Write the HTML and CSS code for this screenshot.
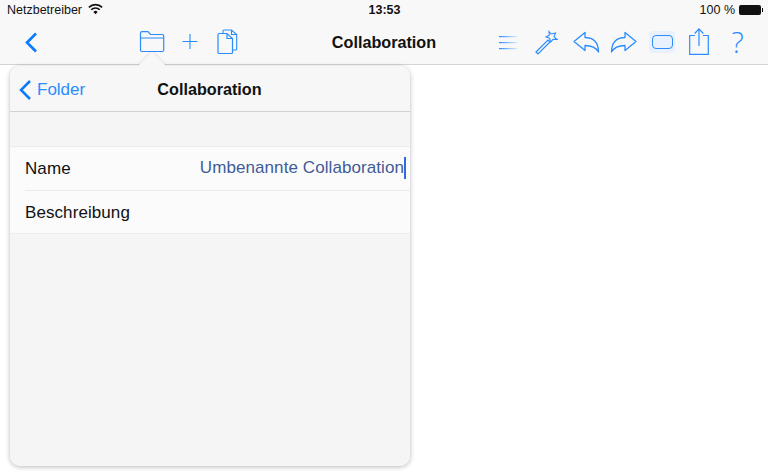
FILE: index.html
```html
<!DOCTYPE html>
<html lang="de">
<head>
<meta charset="utf-8">
<title>Collaboration</title>
<link rel="stylesheet" href="styles.css">
</head>
<body>
<div class="app">
  <header class="topbar">
    <div class="status">
      <div class="status-left">
        <span>Netzbetreiber</span>
        <svg class="wifi" width="15" height="12" viewBox="0 0 14 11"><path d="M.8 4 A8.700 8.700 0 0 1 13.200 4" fill="none" stroke="#111" stroke-width="1.500"/><path d="M3 6.200 A5.600 5.600 0 0 1 11 6.200" fill="none" stroke="#111" stroke-width="1.500"/><path d="M5 8.200 A2.800 2.800 0 0 1 9 8.200 L7 10.300 Z" fill="#111"/></svg>
      </div>
      <div class="clock">13:53</div>
      <div class="status-right">
        <span>100 %</span>
        <span class="battery"></span>
      </div>
    </div>
    <nav class="nav">
      <div class="nav-left">
        <svg class="ico back" width="14" height="44" viewBox="0 0 14 44"><path d="M12 13.500 L3 22.500 L12 31.500" fill="none" stroke="#0a7aff" stroke-width="2.600"/></svg>
        <svg class="ico folder" width="26" height="44" viewBox="0 0 26 44"><path d="M1.500 18 V13 Q1.500 11.700 3 11.700 H9 L11.500 14.500 H23.500 Q24.700 14.500 24.700 16 V30 Q24.700 31.500 23.300 31.500 H3 Q1.500 31.500 1.500 30 Z M1.500 18 H24.700" fill="none" stroke="#2a8cff" stroke-width="1.200"/></svg>
        <svg class="ico plus" width="16" height="44" viewBox="0 0 16 44"><path d="M8 14 V29 M0.500 21.500 H15.500" fill="none" stroke="#2a8cff" stroke-width="1.100"/></svg>
        <svg class="ico copy" width="21" height="44" viewBox="0 0 21 44"><path d="M6 13 V11 Q6 10 7 10 H14.500 L19.700 14.500 V29 Q19.700 30 18.700 30 H15.500 M14.500 10 V14.500 H19.700" fill="none" stroke="#2a8cff" stroke-width="1.100"/><path d="M1 15 Q1 13.500 2.300 13.500 H10 L15.500 18.500 V32.500 Q15.500 33.500 14.500 33.500 H2.300 Q1 33.500 1 32.500 Z M10 13.500 V18.500 H15.500" fill="none" stroke="#2a8cff" stroke-width="1.200"/></svg>
      </div>
      <div class="nav-title">Collaboration</div>
      <div class="nav-right">
        <svg class="ico list" width="18" height="44" viewBox="0 0 18 44"><defs><linearGradient id="fade"><stop offset="0" stop-color="#2a8cff"/><stop offset="1" stop-color="#2a8cff" stop-opacity=".15"/></linearGradient></defs><rect x="0" y="16" width="18" height="1.200" fill="url(#fade)"/><rect x="0" y="22" width="18" height="1.200" fill="url(#fade)"/><rect x="0" y="28" width="18" height="1.200" fill="url(#fade)"/></svg>
        <svg class="ico wand" width="24" height="44" viewBox="0 0 24 44"><path d="M1 32 L13 20 L15 22 L3 34 Z" fill="none" stroke="#2a8cff" stroke-width="1.200"/><path d="M14 11.500 L16.200 14 L20.500 13 L19 16.700 L22 19.500 L18 19.300 L15.800 22 L14.500 18.300 L11 17 L14.300 15.200 Z" fill="#f8f8f8" stroke="#2a8cff" stroke-width="1.100"/></svg>
        <svg class="ico reply" width="27" height="44" viewBox="0 0 27 44"><path d="M1 21.500 L12 12.500 V17.500 C20 17.500 25.500 22 25.500 32 C23 27.500 18.500 25.500 12 25.500 V30.500 Z" fill="none" stroke="#2a8cff" stroke-width="1.300" stroke-linejoin="round"/></svg>
        <svg class="ico forward" width="27" height="44" viewBox="0 0 27 44"><path d="M26 21.500 L15 12.500 V17.500 C7 17.500 1.500 22 1.500 32 C4 27.500 8.500 25.500 15 25.500 V30.500 Z" fill="none" stroke="#2a8cff" stroke-width="1.300" stroke-linejoin="round"/></svg>
        <div class="frame-btn"><span class="frame"></span></div>
        <svg class="ico share" width="20" height="44" viewBox="0 0 20 44"><path d="M6 15.500 H0.700 V34.300 H19.300 V15.500 H14 M10 26 V9.500 M5.700 13.500 L10 8.800 L14.300 13.500" fill="none" stroke="#2a8cff" stroke-width="1.200"/></svg>
        <div class="help">?</div>
      </div>
    </nav>
  </header>

  <section class="popover">
    <span class="arrow"></span>
    <div class="pop-inner">
      <div class="pop-head">
        <div class="pop-back">
          <svg width="14" height="20" viewBox="0 0 14 20"><path d="M12 1 L3 10 L12 19" fill="none" stroke="#0a7aff" stroke-width="2.500"/></svg>
          <span>Folder</span>
        </div>
        <div class="pop-title">Collaboration</div>
      </div>
      <div class="group">
        <div class="row row-first">
          <span>Name</span>
          <span class="value">Umbenannte Collaboration<i class="caret"></i></span>
        </div>
        <div class="row row-last">
          <span>Beschreibung</span>
        </div>
      </div>
    </div>
  </section>
</div>
</body>
</html>
```

FILE: styles.css
```css
* { box-sizing: border-box; }
html, body { margin: 0; padding: 0; }
body {
  width: 768px;
  height: 472px;
  overflow: hidden;
  background: #fff;
  font-family: "Liberation Sans", Arial, sans-serif;
  color: #111;
}
.app { position: relative; width: 768px; height: 472px; }

.topbar {
  height: 65px;
  background: #f8f8f8;
  border-bottom: 1px solid #d4d4d4;
}
.status {
  height: 20px;
  display: grid;
  grid-template-columns: 1fr auto 1fr;
  align-items: center;
  font-size: 12.500px;
  padding: 0 6px 0 7px;
}
.status-left { display: flex; align-items: center; gap: 6px; }
.wifi { margin-top: -2px; }
.clock { font-weight: 700; font-size: 12.500px; }
.status-right { display: flex; justify-content: flex-end; align-items: center; gap: 4px; }
.battery {
  position: relative;
  width: 22px;
  height: 10px;
  background: #111;
  border-radius: 2px;
  margin-right: 1px;
}
.battery::after {
  content: "";
  position: absolute;
  right: -2px;
  top: 3px;
  width: 1.500px;
  height: 4px;
  background: #111;
}

.nav {
  height: 44px;
  display: grid;
  grid-template-columns: 1fr auto 1fr;
  align-items: center;
}
.nav-left { display: flex; align-items: center; padding-left: 24px; }
.nav-right { display: flex; align-items: center; justify-content: flex-end; padding-right: 23px; }
.ico { display: block; flex: none; }
.folder { margin-left: 101px; }
.plus { margin-left: 17px; }
.copy { margin-left: 19px; }
.nav-title, .pop-title { font-size: 16.200px; font-weight: 700; color: #111; }
.nav-title { padding-top: 1px; }
.wand { margin-left: 18px; }
.reply { margin-left: 14px; }
.forward { margin-left: 10px; }
.frame-btn {
  margin-left: 12px;
  width: 26px;
  height: 22px;
  background: #e8f1fc;
  border-radius: 4px;
  display: flex;
  align-items: center;
  justify-content: center;
}
.frame {
  width: 21px;
  height: 14px;
  border: 1.300px solid #2a8cff;
  border-radius: 4px;
}
.share { margin-left: 14px; }
.help {
  margin-left: 21px;
  width: 15px;
  font-size: 29px;
  font-family: "Open Sans", sans-serif;
  font-weight: 300;
  line-height: 44px;
  color: #2a8cff;
  text-align: center;
}

.popover {
  position: absolute;
  left: 10px;
  top: 66px;
  width: 400px;
  height: 400px;
  border-radius: 10px;
  background: #f5f5f5;
  box-shadow: 0 1px 5px rgba(0, 0, 0, .28);
}
.arrow {
  position: absolute;
  left: 132px;
  top: -10px;
  width: 20px;
  height: 20px;
  background: #f7f7f7;
  transform: rotate(45deg);
  box-shadow: -1px -1px 3px rgba(0, 0, 0, .08);
}
.pop-inner {
  position: relative;
  height: 100%;
  border-radius: 10px;
  background: #f5f5f5;
  overflow: hidden;
}
.pop-head {
  position: relative;
  height: 46px;
  background: #f7f7f7;
  border-bottom: 1px solid #d2d2d2;
  display: flex;
  align-items: center;
  justify-content: center;
}
.pop-title { margin-right: 1px; padding-top: 1px; }
.pop-back {
  position: absolute;
  left: 8px;
  top: 14px;
  display: flex;
  align-items: center;
  gap: 5px;
  color: #2a8cff;
  font-size: 17px;
}
.group {
  margin-top: 34px;
  background: #fbfbfb;
  border-top: 1px solid #ececec;
  border-bottom: 1px solid #ececec;
  font-size: 17px;
  letter-spacing: .08px;
  padding-left: 15px;
}
.row {
  display: flex;
  align-items: center;
  justify-content: space-between;
  color: #111;
}
.row-first { border-bottom: 1px solid #ececec; height: 44px; }
.row-last { height: 42px; padding-top: 2px; }
.value {
  position: relative;
  color: #3f5b97;
  padding-right: 6px;
  margin-top: -2px;
}
.caret {
  position: absolute;
  right: 4.500px;
  top: -1px;
  width: 2px;
  height: 22px;
  background: #3467e0;
}
```
